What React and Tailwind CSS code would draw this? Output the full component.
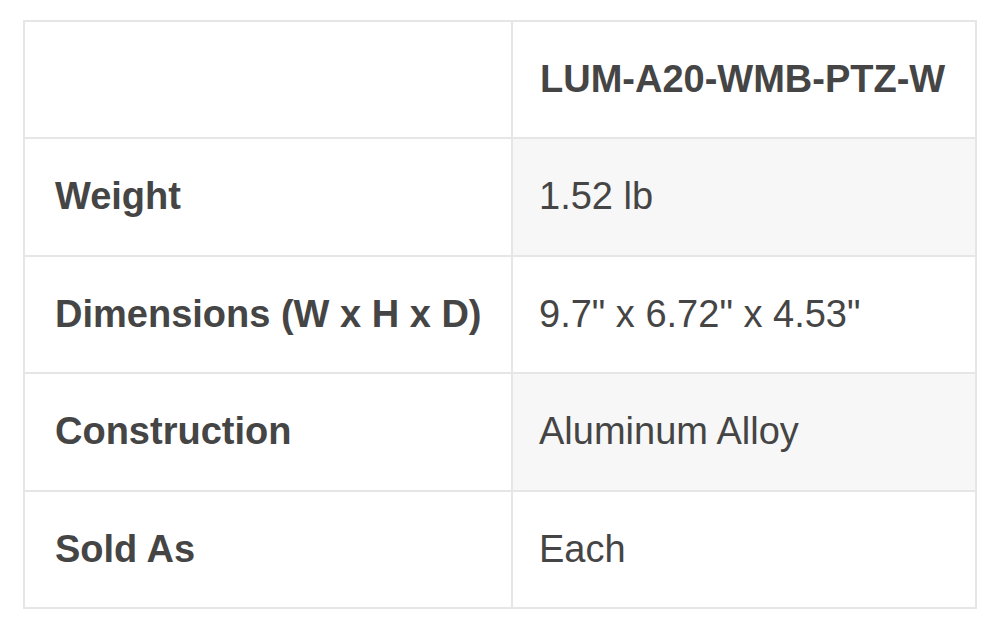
export default function App() {
  const rows = [
    ["Weight", "1.52 lb"],
    ["Dimensions (W x H x D)", '9.7" x 6.72" x 4.53"'],
    ["Construction", "Aluminum Alloy"],
    ["Sold As", "Each"],
  ];
  return (
    <div
      className="w-[1000px] h-[625px] bg-white pt-[20px] pl-[23px] text-[#454545] text-[38px]"
      style={{ fontFamily: '"Liberation Sans", Arial, Helvetica, sans-serif' }}
    >
      <div className="w-[954px] border-2 border-[#e6e6e6] flex flex-col">
        <div className="flex h-[115px]">
          <div className="w-[488px] border-r-2 border-[#e6e6e6]" />
          <div className="flex-1 flex items-center pl-[27px] font-bold">LUM-A20-WMB-PTZ-W</div>
        </div>
        {rows.map(([k, v], i) => (
          <div key={k} className="flex h-[117.5px] border-t-2 border-[#e6e6e6]">
            <div className="w-[488px] border-r-2 border-[#e6e6e6] flex items-center pl-[30px] font-bold">
              {k}
            </div>
            <div
              className={
                i % 2 === 0
                  ? "flex-1 flex items-center pl-[26px] bg-[#f7f7f7]"
                  : "flex-1 flex items-center pl-[26px]"
              }
            >
              {v}
            </div>
          </div>
        ))}
      </div>
    </div>
  );
}
